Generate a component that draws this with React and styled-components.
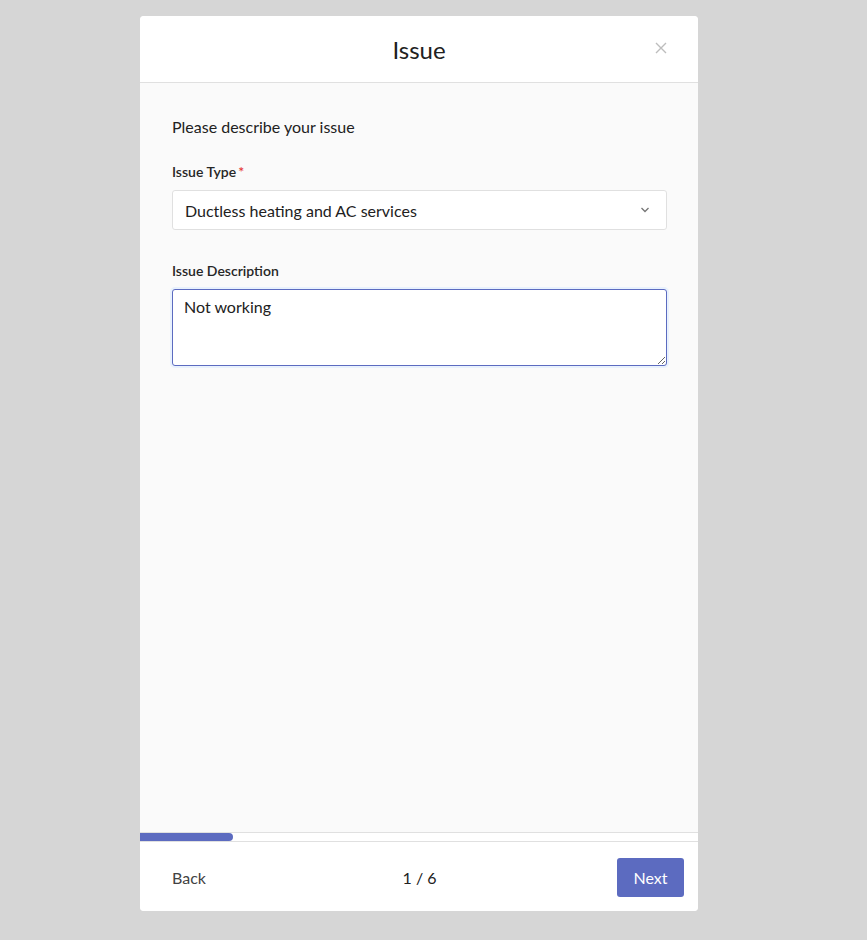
import React, {useState} from "react";
import styled, {createGlobalStyle} from "styled-components";

const GlobalStyle = createGlobalStyle`
  html, body {
    margin: 0;
    padding: 0;
    background: #d6d6d6;
    font-family: Lato, "Noto Sans", sans-serif;
    color: #212121;
  }
`;

const Page = styled.div`
  min-height: 940px;
  display: flex;
  justify-content: flex-start;
  padding: 16px 0 0 140px;
  box-sizing: border-box;
`;

const Modal = styled.div`
  width: 558px;
  height: 895px;
  background: #fafafa;
  border-radius: 4px;
  display: flex;
  flex-direction: column;
  overflow: hidden;
`;

const Header = styled.div`
  height: 67px;
  flex: none;
  background: #fff;
  border-bottom: 1px solid #e0e0e0;
  display: flex;
  align-items: center;
  justify-content: center;
  position: relative;
  box-sizing: border-box;
`;

const Title = styled.h1`
  margin: 0;
  font-size: 24px;
  font-weight: 400;
  color: #212121;
`;

const CloseButton = styled.button`
  position: absolute;
  right: 30px;
  top: 25px;
  width: 14px;
  height: 14px;
  padding: 0;
  border: none;
  background: none;
  cursor: pointer;
  display: flex;
`;

const Body = styled.div`
  flex: 1;
  padding: 34px 31px 0 32px;
  display: flex;
  flex-direction: column;
`;

const Intro = styled.p`
  margin: 0 0 26px;
  font-size: 16px;
  line-height: 20px;
`;

const Field = styled.div`
  display: flex;
  flex-direction: column;
  margin-bottom: ${p => p.$gap || 0}px;
`;

const Label = styled.label`
  font-size: 14px;
  font-weight: 600;
  color: #262626;
  line-height: 18px;
  margin-bottom: 9px;

  span {
    color: #e53935;
    margin-left: 2px;
  }
`;

const SelectBox = styled.div`
  height: 40px;
  box-sizing: border-box;
  background: #fff;
  border: 1px solid #e0e0e0;
  border-radius: 3px;
  display: flex;
  align-items: center;
  justify-content: space-between;
  padding: 0 16px 0 12px;
  font-size: 16px;
  color: #212121;
`;

const TextArea = styled.textarea`
  height: 77px;
  box-sizing: border-box;
  background: #fff;
  border: 1px solid #5c6bc0;
  border-radius: 3px;
  box-shadow: 0 0 0 2px #e8f1fd;
  padding: 7px 11px;
  font-family: inherit;
  font-size: 16px;
  color: #212121;
  outline: none;
  resize: vertical;
`;

const Track = styled.div`
  flex: none;
  height: 10px;
  background: #fff;
  border-top: 1px solid #e0e0e0;
  border-bottom: 1px solid #e0e0e0;
  box-sizing: border-box;
  display: flex;
`;

const Fill = styled.div`
  height: 8px;
  background: #5c6bc0;
  border-radius: 0 4px 4px 0;
`;

const Footer = styled.div`
  height: 69px;
  flex: none;
  background: #fff;
  display: flex;
  align-items: center;
  justify-content: space-between;
  padding: 2px 14px 0 32px;
  box-sizing: border-box;
`;

const BackButton = styled.button`
  border: none;
  background: none;
  padding: 0;
  font-family: inherit;
  font-size: 16px;
  color: #424242;
  width: 60px;
  text-align: left;
  cursor: pointer;
`;

const Steps = styled.div`
  font-size: 16px;
  color: #212121;
  margin-left: -10px;
`;

const NextButton = styled.button`
  width: 67px;
  height: 39px;
  border: none;
  border-radius: 3px;
  background: #5c6bc0;
  color: #fff;
  font-family: inherit;
  font-size: 16px;
  cursor: pointer;
`;

const CloseIcon = () => (
  <svg width="14" height="14" viewBox="0 0 14 14">
    <path d="M2 2L12 12M12 2L2 12" stroke="#bdbdbd" strokeWidth="1.4" />
  </svg>
);

const Chevron = () => (
  <svg width="10" height="6" viewBox="0 0 10 6">
    <path d="M1.5 1L5 4.5L8.5 1" stroke="#757575" strokeWidth="1.3" fill="none" />
  </svg>
);

export default function App() {
  const [text, setText] = useState("Not working");
  const step = 1;
  const total = 6;

  return (
    <>
      <GlobalStyle />
      <Page>
        <Modal>
          <Header>
            <Title>Issue</Title>
            <CloseButton aria-label="close"><CloseIcon /></CloseButton>
          </Header>
          <Body>
            <Intro>Please describe your issue</Intro>
            <Field $gap={32}>
              <Label>Issue Type<span>*</span></Label>
              <SelectBox>
                Ductless heating and AC services
                <Chevron />
              </SelectBox>
            </Field>
            <Field>
              <Label>Issue Description</Label>
              <TextArea value={text} onChange={e => setText(e.target.value)} />
            </Field>
          </Body>
          <Track>
            <Fill style={{width: `${(step / total) * 100}%`}} />
          </Track>
          <Footer>
            <BackButton>Back</BackButton>
            <Steps>{step} / {total}</Steps>
            <NextButton>Next</NextButton>
          </Footer>
        </Modal>
      </Page>
    </>
  );
}
